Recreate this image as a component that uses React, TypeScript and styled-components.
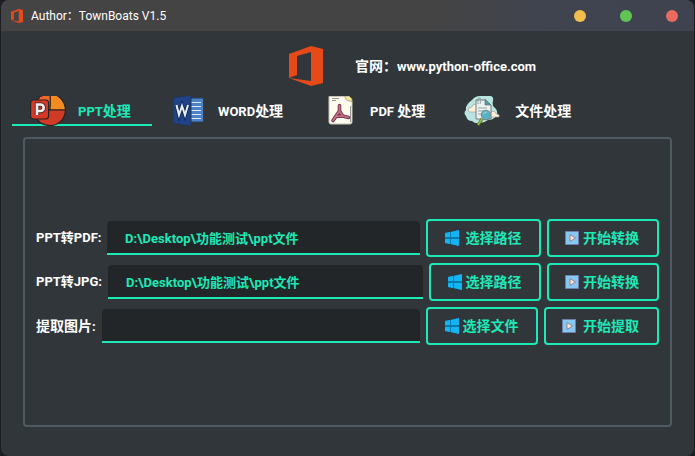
import React, { useState } from "react";
import styled, { createGlobalStyle } from "styled-components";

const accent = "#1de9b6";
const surface = "#31363b";
const outline = "#4f5b62";
const field = "#232629";

const GlobalStyle = createGlobalStyle`
  * { box-sizing: border-box; }
  body {
    margin: 0;
    background: #1d1d24;
    color: #fff;
    font: 700 13px/18px Roboto, "Noto Sans CJK SC", sans-serif;
  }
  button, input { font: inherit; }
`;

const Window = styled.main`
  display: flex;
  flex-direction: column;
  min-height: 100vh;
  margin: 0 1px;
  padding-bottom: 1px;
  border-radius: 8px;
  overflow: hidden;
  background: ${surface};
`;

const TitleBar = styled.header`
  display: flex;
  align-items: center;
  gap: 8px;
  height: 31px;
  padding: 0 16px 0 10px;
  background: linear-gradient(90deg, #444 0%, #444 62%, #40444f 78%, #3f4350 100%);
`;

const Title = styled.h1`
  flex: 1;
  margin: 0;
  font: 400 12px/18px Roboto, "Noto Sans CJK SC", sans-serif;
`;

const Controls = styled.div`
  display: flex;
  gap: 34px;
`;

const Dot = styled.button<{ $color: string }>`
  width: 12px;
  height: 12px;
  padding: 0;
  border: 0;
  border-radius: 50%;
  background: ${(p) => p.$color};
`;

const Site = styled.div`
  display: flex;
  align-items: center;
  justify-content: center;
  gap: 32px;
  padding: 15px 0 10px;
  margin-right: 126px;
  margin-left: 256px;
`;

const SiteText = styled.span`
  white-space: nowrap;
`;

const Tabs = styled.nav`
  display: flex;
  height: 30px;
  padding-left: 11px;
`;

const Tab = styled.button<{ $active: boolean; $width: number }>`
  display: flex;
  align-items: center;
  gap: 12px;
  width: ${(p) => p.$width}px;
  padding: 0 0 0 18px;
  border: 0;
  background: linear-gradient(${(p) => (p.$active ? accent : "transparent")} 0 0) bottom / 100% 2px no-repeat;
  color: ${(p) => (p.$active ? accent : "#fff")};
  white-space: pre;
`;

const Han = styled.span`
  font-size: 14px;
`;

const Panel = styled.section`
  display: flex;
  flex: 1;
  flex-direction: column;
  justify-content: center;
  gap: 6px;
  margin: 11px 22px 28px;
  padding: 0 11px;
  border: 2px solid ${outline};
  border-radius: 4px;
`;

const Row = styled.form`
  display: flex;
  align-items: center;
  gap: 6px;
`;

const Label = styled.label<{ $width: number }>`
  width: ${(p) => p.$width}px;
  white-space: nowrap;
`;

const PathInput = styled.input`
  flex: 1;
  min-width: 0;
  height: 34px;
  padding: 0 18px;
  border: 0;
  border-bottom: 2px solid ${accent};
  border-radius: 4px 4px 0 0;
  outline: 0;
  background: ${field};
  color: ${accent};
`;

const Action = styled.button<{ $wide: boolean; $gap: number }>`
  display: flex;
  align-items: center;
  justify-content: center;
  gap: ${(p) => p.$gap}px;
  width: ${(p) => (p.$wide ? 115 : 112)}px;
  height: 38px;
  padding: 0 2px 0 0;
  border: 2px solid ${accent};
  border-radius: 4px;
  background: transparent;
  color: ${accent};
  font-size: 14px;
`;

const OfficeLogo = ({ width, height }: { width: number; height: number }) => (
  <svg width={width} height={height} viewBox="0 0 34 40" preserveAspectRatio="none" aria-hidden="true">
    <path fill="#e64a19" d="M0 8 22 0l12 3v34l-12 3L0 32l22 3V6L8 10v19L0 32z" />
  </svg>
);

const PptIcon = () => (
  <svg width="36" height="30" viewBox="0 0 36 30" aria-hidden="true">
    <g stroke="#262323" strokeWidth="1.2">
      <path fill="#f68b1f" d="M20-2v16h15.500C35 5 29-2 20-2z" />
      <path fill="#f4662e" d="M20-2C12-2 6 3 5 10h15z" />
      <path fill="#d13a27" d="M5 14h30.500C35 23 29 29.500 20 29.500S5 24 5 14z" />
      <path fill="#ef6530" stroke="none" d="M10 1 19.400 0v13H10z" />
      <rect x=".6" y="4" width="18" height="19" rx="3" fill="#d93827" />
    </g>
    <path d="M7 19V8.500h3.500a3.200 3.200 0 0 1 0 6.500H7" fill="none" stroke="#5d2520" strokeWidth="4.500" />
    <path d="M7 19V8.500h3.500a3.200 3.200 0 0 1 0 6.500H7" fill="none" stroke="#edf3f4" strokeWidth="2.600" />
  </svg>
);

const WordIcon = () => (
  <svg width="36" height="30" viewBox="0 0 36 30" aria-hidden="true">
    <path fill="#4d82c3" stroke="#253e67" d="M19 2h14.500v24H19z" />
    <path stroke="#d9e7f6" strokeWidth="1.200" d="M20 6.500h11M20 10.500h11M20 14.500h11M20 18.500h11M20 22.500h11" />
    <path fill="#1f4388" stroke="#253658" d="m3.500 2 17.500-3v31L3.500 27z" />
    <path d="m6.500 9 2.500 10 3-9 3 9 3-10" fill="none" stroke="#152c59" strokeWidth="4" />
    <path d="m6.500 9 2.500 10 3-9 3 9 3-10" fill="none" stroke="#e9eef6" strokeWidth="2" />
  </svg>
);

const PdfIcon = () => (
  <svg width="36" height="30" viewBox="0 0 36 30" aria-hidden="true">
    <path fill="#fffcef" stroke="#c8c4b6" d="M7 .5h18l5 5V26q0 2-2 2H9q-2 0-2-2z" />
    <path fill="#f5e594" stroke="#a69c73" strokeWidth=".8" d="M23 0q0 5 7 5.500V3l-3-3z" />
    <path stroke="#969696" d="M10 2.500h7M10 4.500h4M28.500 10v16" />
    <g fill="none" strokeLinecap="round" strokeLinejoin="round">
      <path stroke="#703b52" strokeWidth="3.600" d="M17.500 9.500v5.500M17.500 15 11 24.500M17.500 15l3 5 6 1.500M11 24.500 14 20.500l6.500-.5" />
      <path stroke="#c96c84" strokeWidth="1.700" d="M17.500 9.500v5.500M17.500 15 11 24.500M17.500 15l3 5 6 1.500M11 24.500 14 20.500l6.500-.5" />
    </g>
  </svg>
);

const FilesIcon = () => (
  <svg width="36" height="30" viewBox="0 0 36 30" aria-hidden="true">
    <path fill="#b9e4df" d="M8 4q3-4 8-4h11q3 1 2 5-1 4 1 6 4 3 3 8-3 5-9 5-4 3-8 3-5 1-8-2-5 0-6-5-3-3 0-6-1-5 6-10z" />
    <path fill="#fff0d9" stroke="#9c9588" strokeWidth=".6" d="M4 15q0-4 4-4 1-4 5-2v7H6zM23 20q0-4 4-4 4-2 5 2 4 0 3 3H24z" />
    <path fill="#edf1ef" stroke="#737c7d" d="M12 4h9l6 5v14H12z" />
    <path fill="#4d9ba5" stroke="#60777d" strokeWidth=".7" d="m21 3 6 6h-6z" />
    <path fill="none" stroke="#7f9699" strokeWidth=".8" d="M14 12h9M14 15h7M14 18h4M14 8V4q0-3 2-2t0 6" />
    <path stroke="#59712b" strokeWidth="3" d="m18 23-4 6" />
    <path stroke="#a5bd38" strokeWidth="1.400" d="m18 23-4 6" />
    <circle cx="22" cy="19" r="4.600" fill="#59b5c5" stroke="#718f98" strokeWidth="1.200" />
    <path fill="none" stroke="#b9e4df" d="M19.500 18q1-2 3-2" />
  </svg>
);

const WindowsIcon = () => (
  <svg width="16" height="16" viewBox="0 0 16 16" aria-hidden="true">
    <path fill="#087aa9" d="m1 3 14-3v16L1 13z" />
    <path fill="#13b4f3" d="m1 3 5-1v5H1zM7 2l8-2v7H7zM1 9h5v5l-5-1zM7 9h8v7l-8-2z" />
  </svg>
);

const PlayIcon = () => (
  <svg width="14" height="14" viewBox="0 0 14 14" aria-hidden="true">
    <path fill="#85c8f3" stroke="#6e7faa" d="M.5.5h13v13H.5z" />
    <path fill="#ffe3d2" stroke="#806f80" strokeWidth=".8" strokeLinejoin="round" d="M5 3.500v7L10.500 7z" />
  </svg>
);

const tabs = [
  { width: 140, icon: <PptIcon />, text: <>PPT<Han>处理</Han></> },
  { width: 152, icon: <WordIcon />, text: <>WORD<Han>处理</Han></> },
  { width: 142, icon: <PdfIcon />, text: <>PDF <Han>处理</Han></> },
  { width: 147, icon: <FilesIcon />, text: <> <Han>文件处理</Han></> },
];

const rows = [
  { id: "pdf", label: <>PPT转PDF:</>, labelWidth: 65, value: "D:\\Desktop\\功能测试\\ppt文件", pick: "选择路径", run: "开始转换", pickWide: true, runWide: false, pickGap: 6, runGap: 4 },
  { id: "jpg", label: <>PPT转JPG:</>, labelWidth: 66, value: "D:\\Desktop\\功能测试\\ppt文件", pick: "选择路径", run: "开始转换", pickWide: false, runWide: false, pickGap: 3, runGap: 4 },
  { id: "images", label: <><Han>提取图片</Han>:</>, labelWidth: 60, value: "", pick: "选择文件", run: "开始提取", pickWide: false, runWide: true, pickGap: 3, runGap: 7 },
];

export default function App() {
  const [active, setActive] = useState(0);
  return (
    <>
      <GlobalStyle />
      <Window>
        <TitleBar>
          <OfficeLogo width={12} height={14} />
          <Title>Author：TownBoats V1.5</Title>
          <Controls>
            <Dot $color="#f3bd4e" aria-label="最小化" />
            <Dot $color="#60c554" aria-label="最大化" />
            <Dot $color="#ea6a5e" aria-label="关闭" />
          </Controls>
        </TitleBar>
        <Site>
          <OfficeLogo width={34} height={40} />
          <SiteText><Han>官网：</Han>www.python-office.com</SiteText>
        </Site>
        <Tabs role="tablist">
          {tabs.map((tab, i) => (
            <Tab
              key={i}
              type="button"
              role="tab"
              aria-selected={i === active}
              $active={i === active}
              $width={tab.width}
              onClick={() => setActive(i)}
            >
              {tab.icon}
              <span>{tab.text}</span>
            </Tab>
          ))}
        </Tabs>
        <Panel role="tabpanel">
          {rows.map((row) => (
            <Row key={row.id} onSubmit={(e) => e.preventDefault()}>
              <Label htmlFor={row.id} $width={row.labelWidth}>{row.label}</Label>
              <PathInput id={row.id} type="text" defaultValue={row.value} />
              <Action type="button" $wide={row.pickWide} $gap={row.pickGap}>
                <WindowsIcon />
                {row.pick}
              </Action>
              <Action type="submit" $wide={row.runWide} $gap={row.runGap}>
                <PlayIcon />
                {row.run}
              </Action>
            </Row>
          ))}
        </Panel>
      </Window>
    </>
  );
}
